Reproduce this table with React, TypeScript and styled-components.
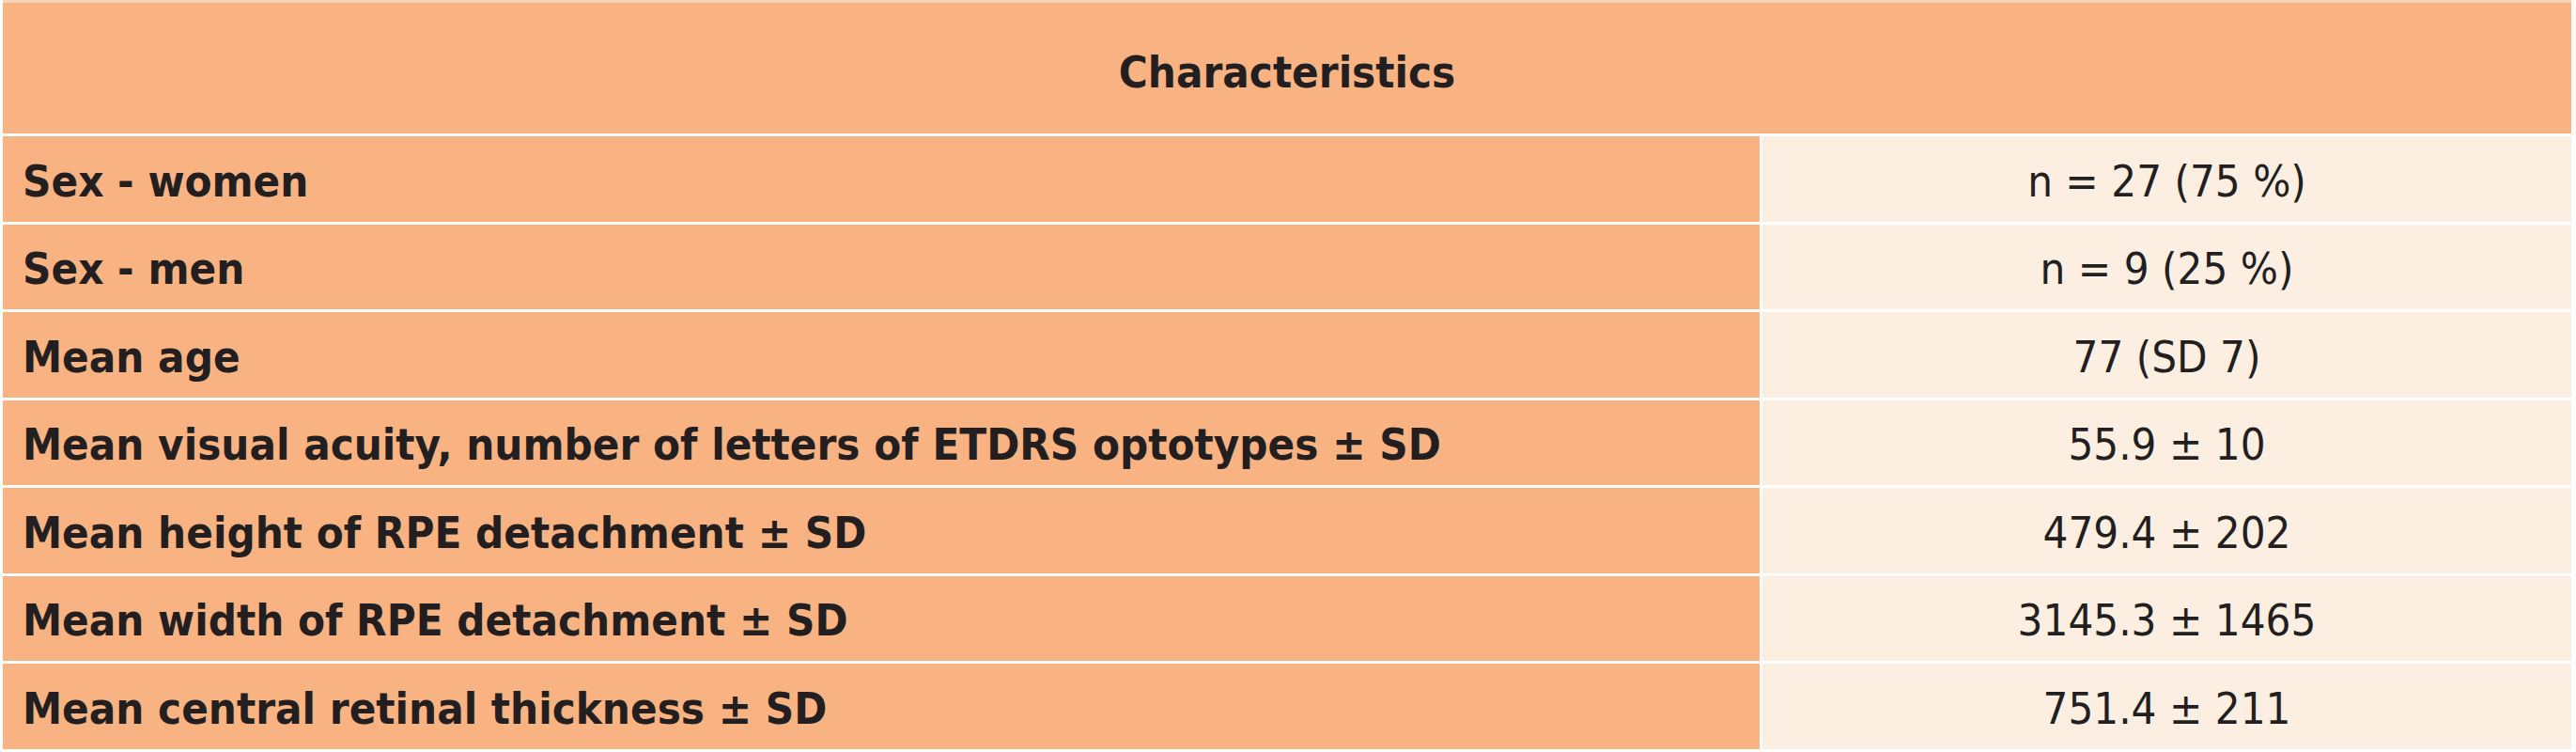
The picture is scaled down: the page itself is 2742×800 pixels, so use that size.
import React, { FC } from 'react';
import styled, { createGlobalStyle } from 'styled-components';

const GlobalStyle = createGlobalStyle`
  html, body { margin: 0; padding: 0; background: #ffffff; }
  body { font-family: "Liberation Sans Narrow", "DejaVu Sans Condensed", "Liberation Sans", sans-serif; color: #231f20; }
`;

const Table = styled.div`
  margin: 0 5px 0 3px;
  border-top: 3px solid #fcd3b6;
  display: grid;
  grid-template-columns: 1870px 1fr;
  column-gap: 3px;
  row-gap: 3px;
  background: #ffffff;
`;

const HeadCell = styled.div`
  grid-column: 1 / span 2;
  height: 139px;
  background: #f9b282;
  display: flex;
  align-items: center;
  justify-content: center;
  font-weight: 700;
  font-size: 47px;
  padding-top: 8px;
  box-sizing: border-box;
`;

const LabelCell = styled.div`
  height: 90.5px;
  box-sizing: border-box;
  padding-top: 4px;
  background: #f9b282;
  display: flex;
  align-items: center;
  padding-left: 21px;
  font-weight: 700;
  font-size: 47px;
`;

const ValueCell = styled.div`
  height: 90.5px;
  box-sizing: border-box;
  padding-top: 4px;
  background: #fdeee2;
  display: flex;
  align-items: center;
  justify-content: center;
  font-size: 47px;
`;

const rows: [string, string][] = [
  ['Sex - women', 'n = 27 (75 %)'],
  ['Sex - men', 'n = 9 (25 %)'],
  ['Mean age', '77 (SD 7)'],
  ['Mean visual acuity, number of letters of ETDRS optotypes ± SD', '55.9 ± 10'],
  ['Mean height of RPE detachment ± SD', '479.4 ± 202'],
  ['Mean width of RPE detachment ± SD', '3145.3 ± 1465'],
  ['Mean central retinal thickness ± SD', '751.4 ± 211'],
];

const App: FC = () => {
  return (
    <>
      <GlobalStyle />
      <Table>
        <HeadCell>Characteristics</HeadCell>
        {rows.map(([label, value]) => (
          <React.Fragment key={label}>
            <LabelCell>{label}</LabelCell>
            <ValueCell>{value}</ValueCell>
          </React.Fragment>
        ))}
      </Table>
    </>
  );
};

export default App;
